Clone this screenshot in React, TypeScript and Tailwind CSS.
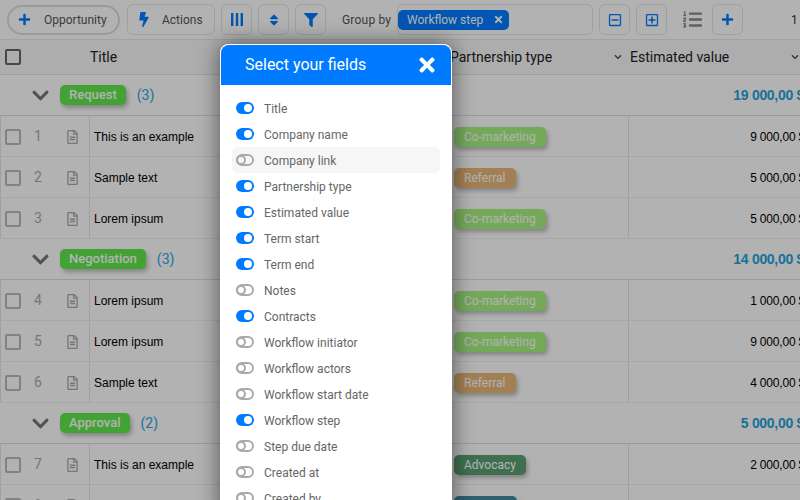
import React from 'react';
import { FaBolt, FaChevronDown, FaFilter, FaListOl, FaPlus, FaRegFileAlt, FaRegMinusSquare, FaRegPlusSquare, FaSort, FaTimes } from 'react-icons/fa';

type Row = { id: number; title: string; tag: string; value: string };
type Group = { name: string; count: number; total: string; rows: Row[] };

const groups: Group[] = [
  {
    name: 'Request',
    count: 3,
    total: '19 000,00 $',
    rows: [
      { id: 1, title: 'This is an example', tag: 'Co-marketing', value: '9 000,00 $' },
      { id: 2, title: 'Sample text', tag: 'Referral', value: '5 000,00 $' },
      { id: 3, title: 'Lorem ipsum', tag: 'Co-marketing', value: '5 000,00 $' },
    ],
  },
  {
    name: 'Negotiation',
    count: 3,
    total: '14 000,00 $',
    rows: [
      { id: 4, title: 'Lorem ipsum', tag: 'Co-marketing', value: '1 000,00 $' },
      { id: 5, title: 'Lorem ipsum', tag: 'Co-marketing', value: '9 000,00 $' },
      { id: 6, title: 'Sample text', tag: 'Referral', value: '4 000,00 $' },
    ],
  },
  {
    name: 'Approval',
    count: 2,
    total: '5 000,00 $',
    rows: [
      { id: 7, title: 'This is an example', tag: 'Advocacy', value: '2 000,00 $' },
      { id: 8, title: 'Sample text', tag: 'Reseller', value: '3 000,00 $' },
    ],
  },
];

const fields: { name: string; on: boolean }[] = [
  { name: 'Title', on: true },
  { name: 'Company name', on: true },
  { name: 'Company link', on: false },
  { name: 'Partnership type', on: true },
  { name: 'Estimated value', on: true },
  { name: 'Term start', on: true },
  { name: 'Term end', on: true },
  { name: 'Notes', on: false },
  { name: 'Contracts', on: true },
  { name: 'Workflow initiator', on: false },
  { name: 'Workflow actors', on: false },
  { name: 'Workflow start date', on: false },
  { name: 'Workflow step', on: true },
  { name: 'Step due date', on: false },
  { name: 'Created at', on: false },
  { name: 'Created by', on: false },
];

const tagStyles: Record<string, string> = {
  'Co-marketing': 'bg-[#a8f282]',
  Referral: 'bg-[#e8b878]',
  Advocacy: 'bg-[#5aa072]',
  Reseller: 'bg-[#438aa0]',
};

function IconButton({ children }: { children: React.ReactNode }) {
  return (
    <button className="w-[31px] h-[31px] flex items-center justify-center border border-[#e6e6e6] rounded-md bg-white text-[#007bff]">
      {children}
    </button>
  );
}

function Toggle({ on }: { on: boolean }) {
  if (on) {
    return (
      <span className="w-[18px] h-[12px] rounded-full bg-[#007bff] flex items-center justify-end pr-[2px] shrink-0">
        <span className="w-[8px] h-[8px] rounded-full bg-white" />
      </span>
    );
  }
  return (
    <span className="w-[18px] h-[12px] rounded-full border-2 border-[#aaaaaa] flex items-center shrink-0">
      <span className="w-[10px] h-[10px] rounded-full border-2 border-[#aaaaaa] -ml-[2px]" />
    </span>
  );
}

function Toolbar() {
  return (
    <div className="h-[40px] flex items-center pl-[7px] bg-white border-b border-[#e8e8e8] text-[12px] text-[#555] font-['Roboto',sans-serif]">
      <button className="w-[113px] h-[30px] flex items-center pl-[9px] gap-[13px] border-2 border-[#dddddd] rounded-full">
        <FaPlus className="text-[#007bff] w-[13px] h-[13px]" />
        <span>Opportunity</span>
      </button>
      <button className="ml-[7px] w-[88px] h-[31px] flex items-center pl-[10px] gap-[12px] border border-[#e6e6e6] rounded-md">
        <FaBolt className="text-[#007bff] w-[12px] h-[15px]" />
        <span>Actions</span>
      </button>
      <div className="ml-[6px] flex gap-[6px]">
        <IconButton>
          <svg width="12" height="13" viewBox="0 0 12 13" fill="currentColor">
            <rect x="0" y="0" width="2.4" height="13" />
            <rect x="4.8" y="0" width="2.4" height="13" />
            <rect x="9.6" y="0" width="2.4" height="13" />
          </svg>
        </IconButton>
        <IconButton>
          <FaSort className="w-[14px] h-[14px]" />
        </IconButton>
        <IconButton>
          <FaFilter className="w-[14px] h-[14px]" />
        </IconButton>
      </div>
      <span className="ml-[16px] w-[55px] tracking-[0.2px]">Group by</span>
      <div className="w-[196px] h-[31px] flex items-center border border-[#e6e6e6] rounded-md">
        <span className="w-[111px] h-[20px] flex items-center justify-between pl-[9px] pr-[5px] rounded-[5px] bg-[#007bff] text-white">
          Workflow step
          <FaTimes className="w-[11px] h-[11px]" />
        </span>
      </div>
      <div className="ml-[6px] flex gap-[6px]">
        <IconButton>
          <FaRegMinusSquare className="w-[14px] h-[14px]" />
        </IconButton>
        <IconButton>
          <FaRegPlusSquare className="w-[14px] h-[14px]" />
        </IconButton>
      </div>
      <FaListOl className="ml-[15px] w-[21px] h-[19px] text-[#888]" />
      <div className="ml-[9px]">
        <IconButton>
          <FaPlus className="w-[13px] h-[13px]" />
        </IconButton>
      </div>
      <span className="ml-[48px] text-[#333]">1</span>
    </div>
  );
}

function HeaderRow() {
  return (
    <div className="h-[35px] w-[808px] flex items-center bg-[#f8f8f8] border-b border-[#e4e4e4] text-[14px] text-[#222] font-['Roboto',sans-serif]">
      <span className="w-[16px] h-[16px] ml-[5px] border-2 border-[#666] rounded-[2px]" />
      <span className="ml-[69px] w-[360px]">Title</span>
      <div className="w-[180px] flex items-center justify-between pr-[8px]">
        <span>Partnership type</span>
        <FaChevronDown className="w-[8px] h-[8px] text-[#444]" />
      </div>
      <div className="w-[169px] flex items-center justify-between">
        <span>Estimated value</span>
        <FaChevronDown className="w-[8px] h-[8px] text-[#444]" />
      </div>
    </div>
  );
}

function GroupRow({ group }: { group: Group }) {
  return (
    <div className="h-[41px] w-[808px] flex items-center bg-white border-b border-[#dfdfdf]">
      <FaChevronDown className="ml-[31px] w-[19px] h-[19px] text-[#777]" />
      <span className="ml-[10px] h-[20px] flex items-center px-[9px] rounded-[5px] bg-[#60e84b] text-white text-[13px] font-['Roboto',sans-serif] font-medium shadow-[2px_3px_4px_rgba(0,0,0,0.25)]">
        {group.name}
      </span>
      <span className="ml-[11px] text-[14px] text-[#25a8e0] font-['Roboto',sans-serif]">({group.count})</span>
      <span className="ml-auto pr-[4px] text-[14px] font-bold tracking-[-0.3px] text-[#1fa2dd] font-['Liberation_Sans',sans-serif]">{group.total}</span>
    </div>
  );
}

function DataRow({ row }: { row: Row }) {
  return (
    <div className="h-[41px] w-[808px] flex items-stretch bg-white border-b border-[#f0f0f0] border-l border-l-[#e6e6e6]">
      <div className="w-[29px] flex items-center pl-[4px] pt-[1px]">
        <span className="w-[16px] h-[16px] border-2 border-[#bbbbbb] rounded-[2px]" />
      </div>
      <div className="w-[30px] flex items-center pl-[4px] pt-[1px] text-[14px] text-[#aaa] font-['Roboto',sans-serif]">{row.id}</div>
      <div className="w-[30px] flex items-center pl-[7px] pt-[1px] border-r border-[#e6e6e6]">
        <FaRegFileAlt className="w-[11px] h-[14px] text-[#aaa]" />
      </div>
      <div className="w-[360px] flex items-center pl-[4px] pt-[1px] text-[12px] text-black font-['Liberation_Sans',sans-serif]">{row.title}</div>
      <div className="w-[179px] flex items-center pl-[4px] pt-[1px] border-r border-[#e6e6e6]">
        <span className={`h-[20px] flex items-center px-[10px] rounded-[5px] text-white text-[12px] font-['Roboto',sans-serif] shadow-[2px_3px_4px_rgba(0,0,0,0.25)] ${tagStyles[row.tag]}`}>
          {row.tag}
        </span>
      </div>
      <div className="flex-1 flex items-center justify-end pr-[3px] pt-[1px] text-[12px] tracking-[-0.2px] text-black font-['Liberation_Sans',sans-serif]">{row.value}</div>
    </div>
  );
}

function FieldsModal() {
  return (
    <div className="absolute left-[220px] top-[44px] w-[232px] bg-white rounded-t-lg border border-white shadow-[0_0_22px_rgba(0,0,0,0.55)]">
      <div className="h-[40px] flex items-center justify-between pl-[24px] pr-[13px] bg-[#007bff] rounded-t-lg text-white text-[16px] font-['Roboto',sans-serif]">
        <span>Select your fields</span>
        <FaTimes className="w-[22px] h-[22px]" />
      </div>
      <div className="pt-[10px] px-[11px] pb-[10px]">
        {fields.map((field) => (
          <div
            key={field.name}
            className={`h-[26px] flex items-center gap-[10px] pl-[4px] rounded-md text-[12px] text-[#666] font-['Roboto',sans-serif] ${field.name === 'Company link' ? 'bg-[#f6f6f6]' : ''}`}
          >
            <Toggle on={field.on} />
            <span className="pt-[1px]">{field.name}</span>
          </div>
        ))}
      </div>
    </div>
  );
}

export default function App() {
  return (
    <div className="relative w-[800px] h-[500px] overflow-hidden bg-white">
      <Toolbar />
      <HeaderRow />
      {groups.map((group) => (
        <div key={group.name}>
          <GroupRow group={group} />
          {group.rows.map((row) => (
            <DataRow key={row.id} row={row} />
          ))}
        </div>
      ))}
      {/* Dimmed backdrop behind the dialog */}
      <div className="absolute inset-0 bg-black/30" />
      <FieldsModal />
    </div>
  );
}
